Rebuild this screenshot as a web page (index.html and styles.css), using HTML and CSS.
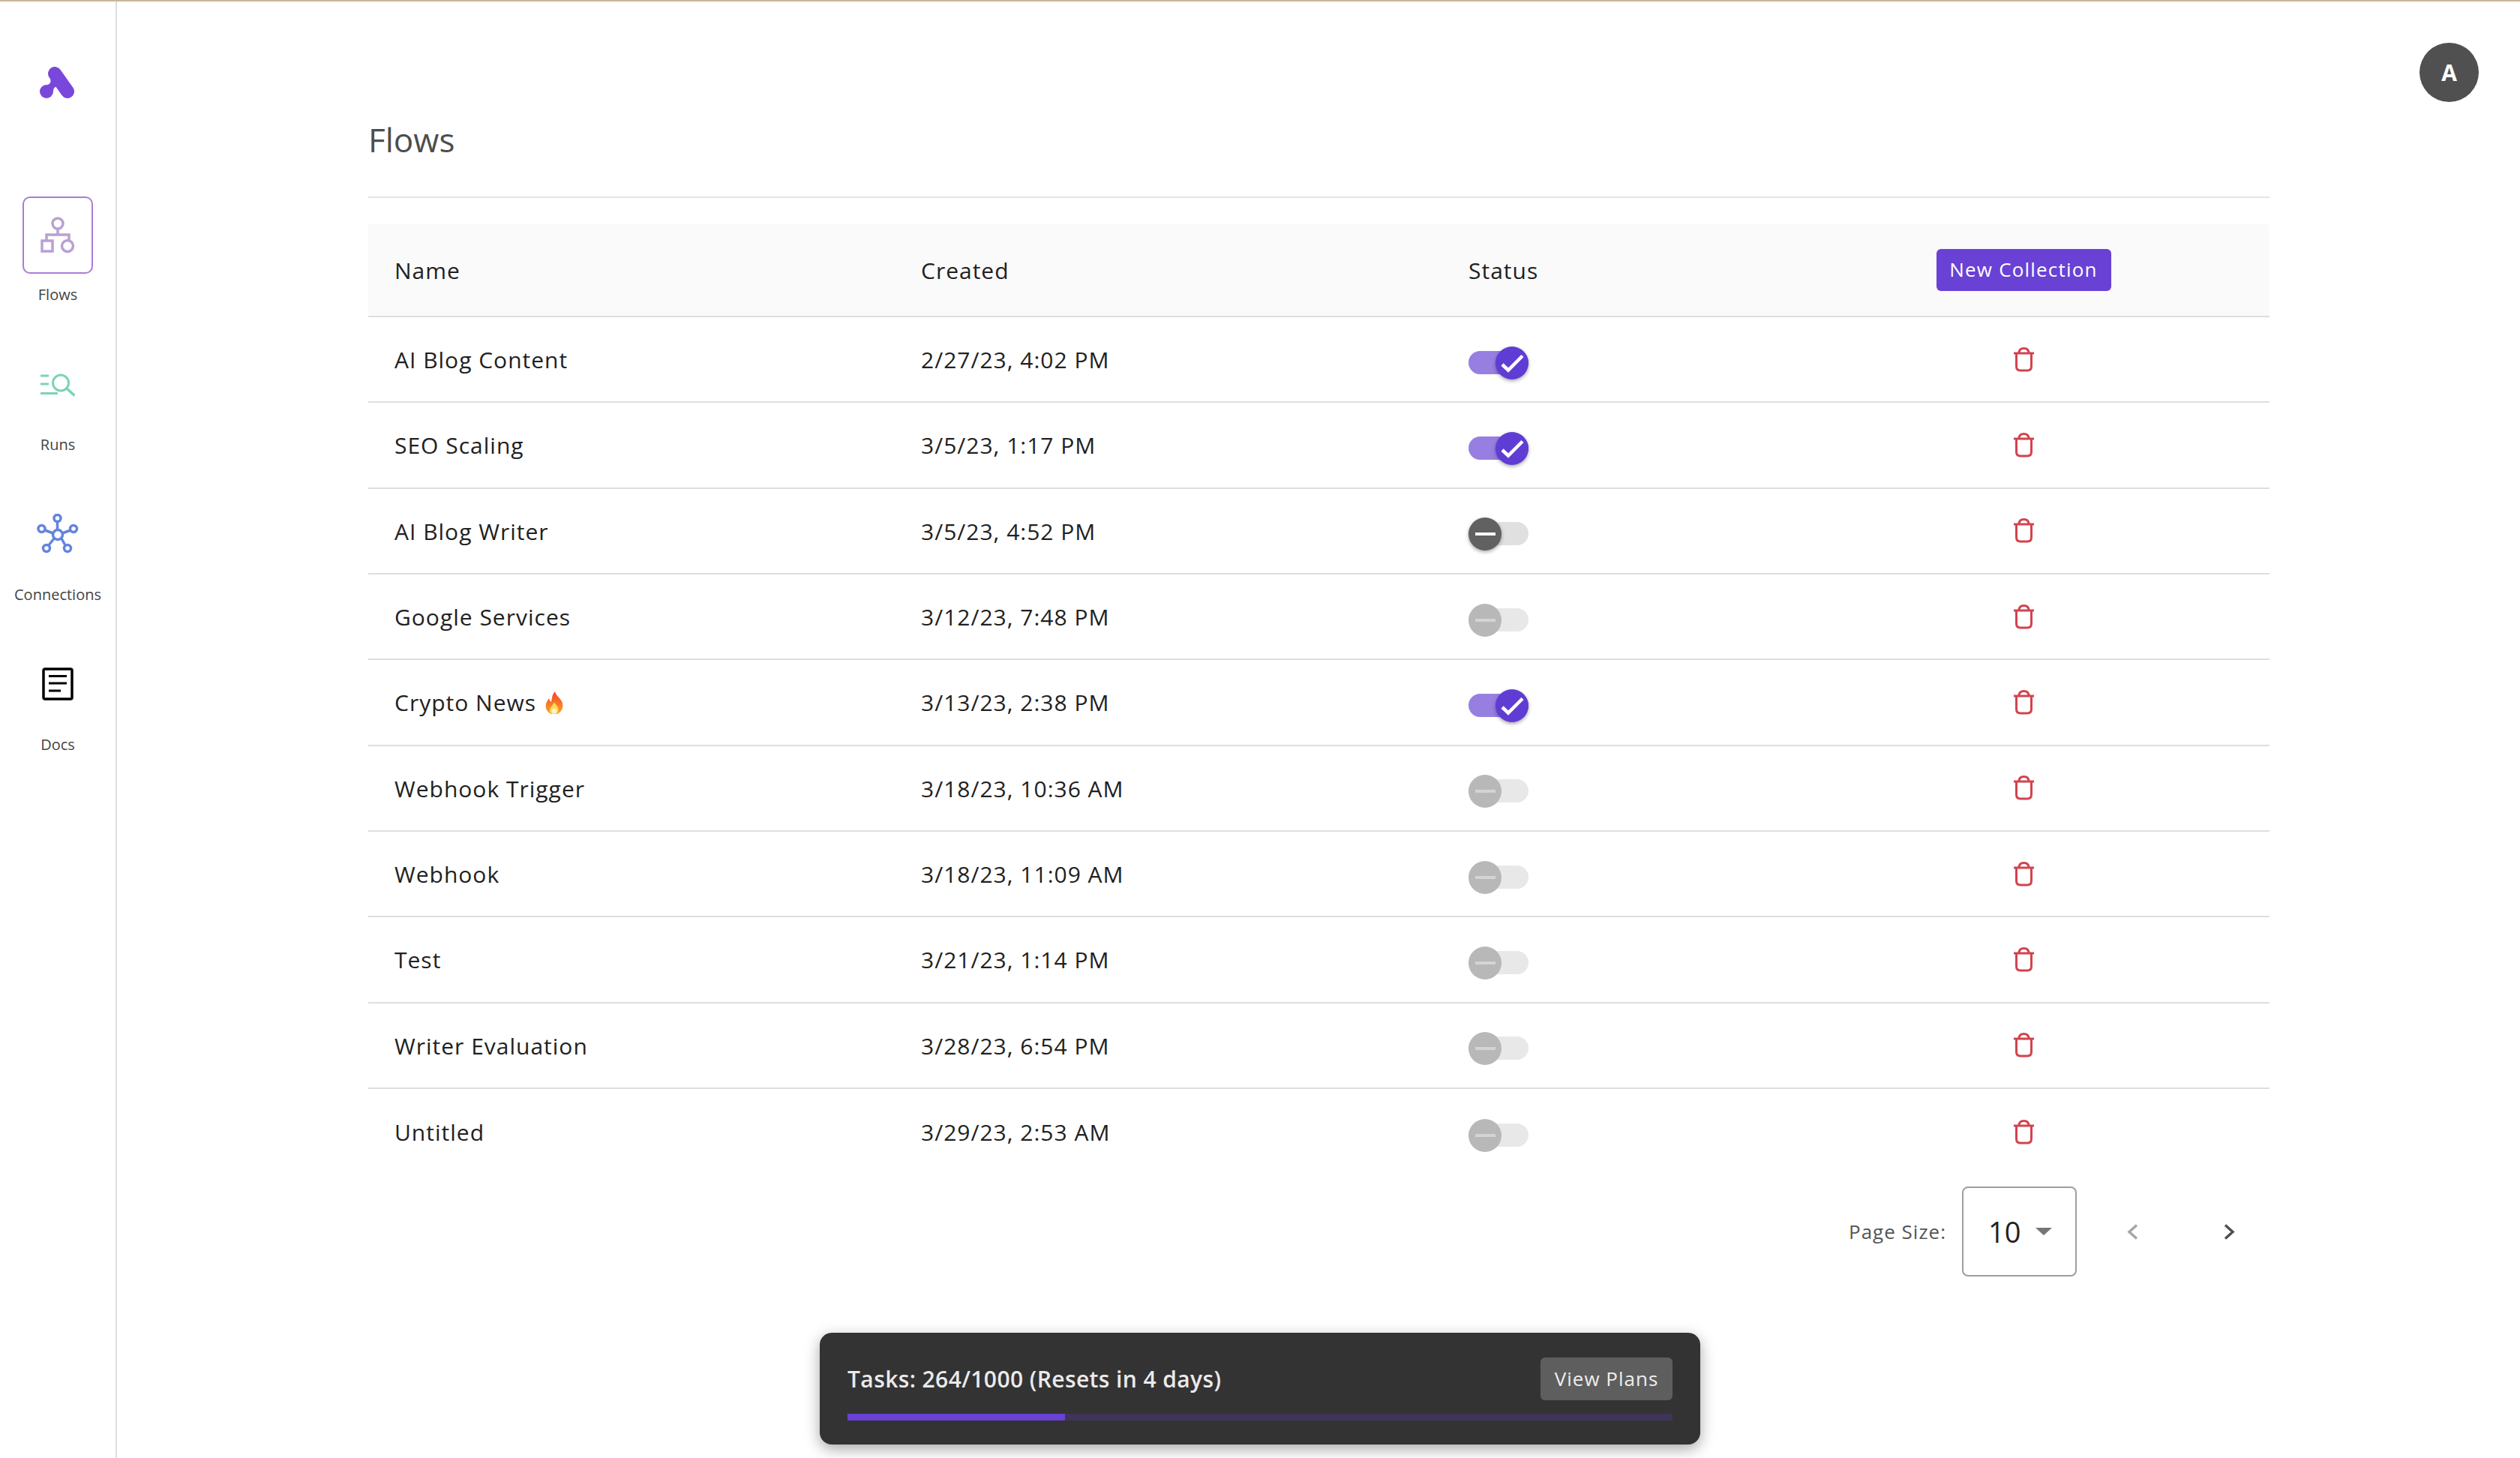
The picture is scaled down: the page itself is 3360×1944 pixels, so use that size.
FILE: index.html
```html
<!DOCTYPE html>
<html>
<head>
    <title>Flows</title>
    <link rel="stylesheet" href="styles.css">
</head>
<body>
<svg class="defs" width="0" height="0">
    <symbol id="trash" viewBox="0 0 27 33">
        <path d="M0 8H27M7 8C7 4 9 1.500 13.500 1.500S20 4 20 8M3.500 8V25.500C3.500 29 5.500 31 9 31H18C21.500 31 23.500 29 23.500 25.500V8" fill="none" stroke="#d1444f" stroke-width="3"/>
    </symbol>
    <symbol id="check" viewBox="0 0 44 44">
        <path d="M9 24L17 31.500L36 12.500" fill="none" stroke="#fff" stroke-width="4.500"/>
    </symbol>
</svg>

<div class="topline"></div>
<div class="app">
    <aside class="sidebar">
        <svg class="logo" width="46" height="42" viewBox="0 0 46 42">
            <path d="M20 9L37 33" fill="none" stroke="#7a47dc" stroke-width="18" stroke-linecap="round"/>
            <circle cx="9" cy="33" r="9" fill="#7a47dc"/>
            <path d="M10 24C16 23 15 17 13 12L24 27C20 25 18 30 18 33Z" fill="#7a47dc"/>
        </svg>
        <nav class="nav">
            <div class="nav-item">
                <div class="nav-icon active">
                    <svg width="46" height="49" viewBox="0 0 46 49" fill="none" stroke="#b9a0d2" stroke-width="3.500">
                        <circle cx="23" cy="9" r="7"/>
                        <path d="M23 16V24M8 32V24H38V32"/>
                        <rect x="2" y="32" width="14" height="14"/>
                        <circle cx="36" cy="39" r="7.500"/>
                    </svg>
                </div>
                <div class="nav-label">Flows</div>
            </div>
            <div class="nav-item">
                <div class="nav-icon">
                    <svg width="46" height="32" viewBox="0 0 46 32" fill="none" stroke="#7dd3b4" stroke-width="3">
                        <path d="M0 3H11M0 14H11M0 26.500H23"/>
                        <circle cx="27" cy="12.500" r="10.500"/>
                        <path d="M35 20L45.500 29.500" stroke-width="3.500"/>
                    </svg>
                </div>
                <div class="nav-label">Runs</div>
            </div>
            <div class="nav-item">
                <div class="nav-icon">
                    <svg class="nudge" width="56" height="54" viewBox="0 0 56 54" fill="none" stroke="#6484dd" stroke-width="3.500">
                        <circle cx="28" cy="28" r="6.500"/>
                        <circle cx="27.500" cy="6" r="4.500"/>
                        <circle cx="6.500" cy="20" r="4.500"/>
                        <circle cx="49" cy="20" r="4.500"/>
                        <circle cx="13" cy="46" r="4.500"/>
                        <circle cx="41" cy="46" r="4.500"/>
                        <path d="M27.500 11V21M11 22L22 26M45 22L34 26M16 42L23 33M38 42L33 33"/>
                    </svg>
                </div>
                <div class="nav-label">Connections</div>
            </div>
            <div class="nav-item">
                <div class="nav-icon">
                    <svg class="nudge" width="42" height="44" viewBox="0 0 42 44" fill="none" stroke="#000">
                        <rect x="2" y="2" width="38" height="40" rx="2" stroke-width="3.500"/>
                        <path d="M9 11.500H33M9 21H33M9 31H25" stroke-width="3"/>
                    </svg>
                </div>
                <div class="nav-label">Docs</div>
            </div>
        </nav>
    </aside>

    <main class="main">
        <h1 class="title">Flows</h1>

        <div class="table">
            <div class="row head">
                <div class="cell">Name</div>
                <div class="cell">Created</div>
                <div class="cell">Status</div>
                <div class="action"><button class="btn-new">New Collection</button></div>
            </div>

            <div class="row">
                <div class="cell">AI Blog Content</div>
                <div class="cell">2/27/23, 4:02 PM</div>
                <div class="switch"><div class="toggle on"><span class="thumb"><svg width="44" height="44"><use href="#check"/></svg></span></div></div>
                <div class="action"><svg class="trash"><use href="#trash"/></svg></div>
            </div>
            <div class="row">
                <div class="cell">SEO Scaling</div>
                <div class="cell">3/5/23, 1:17 PM</div>
                <div class="switch"><div class="toggle on"><span class="thumb"><svg width="44" height="44"><use href="#check"/></svg></span></div></div>
                <div class="action"><svg class="trash"><use href="#trash"/></svg></div>
            </div>
            <div class="row">
                <div class="cell">AI Blog Writer</div>
                <div class="cell">3/5/23, 4:52 PM</div>
                <div class="switch"><div class="toggle off"><span class="thumb"><i class="dash"></i></span></div></div>
                <div class="action"><svg class="trash"><use href="#trash"/></svg></div>
            </div>
            <div class="row">
                <div class="cell">Google Services</div>
                <div class="cell">3/12/23, 7:48 PM</div>
                <div class="switch"><div class="toggle off disabled"><span class="thumb"><i class="dash"></i></span></div></div>
                <div class="action"><svg class="trash"><use href="#trash"/></svg></div>
            </div>
            <div class="row">
                <div class="cell">Crypto News
                    <svg class="fire" width="24" height="30" viewBox="0 0 24 30">
                        <defs>
                            <linearGradient id="flame" x1="0" y1="0" x2="0" y2="1">
                                <stop offset="0" stop-color="#f0452c"/>
                                <stop offset="0.6" stop-color="#fb7d24"/>
                                <stop offset="1" stop-color="#fda32a"/>
                            </linearGradient>
                        </defs>
                        <path d="M13 0C14 5 19 8 22 13C25 19 23 27 16 30H8C1 27-1 20 2 14C3 12 4 11 5 9C6 11 6 13 8 14C9 9 9 4 13 0Z" fill="url(#flame)"/>
                        <path d="M12 14C13 17 18 20 17.500 25C17 28 15 30 12 30C8.500 30 6 28 6 25C6 21 10 19 12 14Z" fill="#fdd85a"/>
                        <circle cx="12" cy="26" r="3.500" fill="#fff3c0"/>
                    </svg>
                </div>
                <div class="cell">3/13/23, 2:38 PM</div>
                <div class="switch"><div class="toggle on"><span class="thumb"><svg width="44" height="44"><use href="#check"/></svg></span></div></div>
                <div class="action"><svg class="trash"><use href="#trash"/></svg></div>
            </div>
            <div class="row">
                <div class="cell">Webhook Trigger</div>
                <div class="cell">3/18/23, 10:36 AM</div>
                <div class="switch"><div class="toggle off disabled"><span class="thumb"><i class="dash"></i></span></div></div>
                <div class="action"><svg class="trash"><use href="#trash"/></svg></div>
            </div>
            <div class="row">
                <div class="cell">Webhook</div>
                <div class="cell">3/18/23, 11:09 AM</div>
                <div class="switch"><div class="toggle off disabled"><span class="thumb"><i class="dash"></i></span></div></div>
                <div class="action"><svg class="trash"><use href="#trash"/></svg></div>
            </div>
            <div class="row">
                <div class="cell">Test</div>
                <div class="cell">3/21/23, 1:14 PM</div>
                <div class="switch"><div class="toggle off disabled"><span class="thumb"><i class="dash"></i></span></div></div>
                <div class="action"><svg class="trash"><use href="#trash"/></svg></div>
            </div>
            <div class="row">
                <div class="cell">Writer Evaluation</div>
                <div class="cell">3/28/23, 6:54 PM</div>
                <div class="switch"><div class="toggle off disabled"><span class="thumb"><i class="dash"></i></span></div></div>
                <div class="action"><svg class="trash"><use href="#trash"/></svg></div>
            </div>
            <div class="row last">
                <div class="cell">Untitled</div>
                <div class="cell">3/29/23, 2:53 AM</div>
                <div class="switch"><div class="toggle off disabled"><span class="thumb"><i class="dash"></i></span></div></div>
                <div class="action"><svg class="trash"><use href="#trash"/></svg></div>
            </div>
        </div>

        <div class="pager">
            <span class="pager-label">Page Size:</span>
            <div class="select"><span>10</span><i class="caret"></i></div>
            <svg class="chev prev" width="15" height="21" viewBox="0 0 15 21"><path d="M13 1.500L3 10.500L13 19.500" fill="none" stroke="#a6a6a6" stroke-width="3.500"/></svg>
            <svg class="chev next" width="15" height="21" viewBox="0 0 15 21"><path d="M2 1.500L12 10.500L2 19.500" fill="none" stroke="#4f4f4f" stroke-width="3.500"/></svg>
        </div>
    </main>
</div>

<div class="avatar">A</div>

<div class="toast">
    <div class="toast-top">
        <span class="toast-text">Tasks: 264/1000 (Resets in 4 days)</span>
        <button class="btn-plans">View Plans</button>
    </div>
    <div class="progress"><div class="progress-fill" style="width: 26.4%"></div></div>
</div>
</body>
</html>
```
FILE: styles.css
```css
* {
    box-sizing: border-box;
}
html, body {
    margin: 0;
    height: 100%;
    overflow: hidden;
}
body {
    font-family: "Open Sans", sans-serif;
    background: #fff;
    color: #212121;
    position: relative;
}
.defs {
    position: absolute;
}
.topline {
    height: 2px;
    background: #c9b79c;
}
.app {
    display: flex;
    height: 1942px;
}

/* left nav */
.sidebar {
    width: 156px;
    flex: none;
    border-right: 2px solid #dedede;
    padding-top: 87px;
}
.logo {
    display: block;
    margin-left: 53px;
}
.nav {
    margin-top: 131px;
}
.nav-item {
    height: 200px;
    display: flex;
    flex-direction: column;
    align-items: center;
    width: 144px;
    margin-left: 5px;
}
.nav-icon {
    width: 94px;
    height: 103px;
    display: flex;
    align-items: center;
    justify-content: center;
    border: 2px solid transparent;
    border-radius: 10px;
}
.nav-icon.active {
    border-color: #a87cd6;
}
.nav-icon .nudge {
    margin-bottom: 3px;
}
.nav-label {
    margin-top: 14px;
    font-size: 20px;
    line-height: 28px;
    color: #444;
}

/* content */
.main {
    flex: 1;
    padding: 0 334px 0 335px;
}
.title {
    margin: 0 0 35px;
    height: 262px;
    padding-top: 154px;
    font-size: 44px;
    line-height: 60px;
    font-weight: 400;
    color: #4d4d4d;
    border-bottom: 2px solid #e4e4ea;
}
.row {
    display: grid;
    grid-template-columns: 702px 730px 447px 1fr;
    align-items: center;
    height: 114.33px;
    border-bottom: 2px solid #dedede;
}
.row.head {
    height: 124px;
    background: #fafafa;
}
.row.last {
    border-bottom: 0;
}
.cell {
    padding: 2px 0 0 35px;
    font-size: 30px;
    line-height: 40px;
    letter-spacing: 1px;
    color: #212121;
    white-space: nowrap;
}
.switch {
    padding-left: 35px;
}
.action {
    display: flex;
    justify-content: center;
}
.btn-new {
    width: 233px;
    height: 56px;
    border: 0;
    border-radius: 6px;
    background: #6941d5;
    color: #fff;
    font-family: inherit;
    font-size: 26px;
    letter-spacing: 1.2px;
    padding: 0 0 2px;
}
.trash {
    display: block;
    width: 27px;
    height: 33px;
}
.fire {
    vertical-align: -4px;
    margin-left: 3px;
}

/* status switch */
.toggle {
    width: 80px;
    height: 31px;
    border-radius: 16px;
    position: relative;
    top: 4px;
}
.thumb {
    position: absolute;
    top: -6px;
    width: 44px;
    height: 44px;
    border-radius: 50%;
    display: flex;
    align-items: center;
    justify-content: center;
    box-shadow: 0 2px 5px rgba(0, 0, 0, 0.35);
}
.toggle.on {
    background: #977fe2;
}
.toggle.on .thumb {
    right: 0;
    background: #5f3dd4;
}
.toggle.off {
    background: #e0e0e0;
}
.toggle.off .thumb {
    left: 0;
    background: #616161;
}
.toggle.disabled {
    background: #e8e8e8;
}
.toggle.disabled .thumb {
    background: #b8b8b8;
    box-shadow: none;
}
.dash {
    display: block;
    width: 27px;
    height: 4px;
    background: #fff;
}
.toggle.disabled .dash {
    background: #d4d4d4;
}

/* pager */
.pager {
    display: flex;
    align-items: center;
    margin-top: 16px;
    padding-left: 1974px;
}
.pager-label {
    width: 151px;
    font-size: 26px;
    letter-spacing: 1px;
    color: #555;
    white-space: nowrap;
}
.select {
    width: 153px;
    height: 120px;
    border: 2px solid #9e9e9e;
    border-radius: 8px;
    display: flex;
    align-items: center;
    padding-left: 33px;
    font-size: 38px;
    color: #212121;
}
.caret {
    margin-left: 20px;
    border-left: 11px solid transparent;
    border-right: 11px solid transparent;
    border-top: 10px solid #757575;
}
.chev.prev {
    margin-left: 67px;
}
.chev.next {
    margin-left: 114px;
}

/* overlays */
.avatar {
    position: absolute;
    top: 57px;
    left: 3226px;
    width: 79px;
    height: 79px;
    border-radius: 50%;
    background: #505050;
    color: #fff;
    font-size: 30px;
    font-weight: 700;
    line-height: 79px;
    text-align: center;
}
.toast {
    position: absolute;
    left: 1093px;
    top: 1777px;
    width: 1174px;
    height: 149px;
    padding: 33px 37px 0;
    background: #333;
    border-radius: 16px;
    box-shadow: 0 6px 20px rgba(0, 0, 0, 0.35);
}
.toast-top {
    display: flex;
    align-items: center;
    justify-content: space-between;
    height: 57px;
}
.toast-text {
    font-size: 30px;
    font-weight: 600;
    letter-spacing: 0.4px;
    color: #eaeaea;
}
.btn-plans {
    width: 176px;
    height: 57px;
    border: 0;
    border-radius: 6px;
    background: #5e5e5e;
    color: #eee;
    font-family: inherit;
    font-size: 26px;
    letter-spacing: 1px;
    padding: 0 0 2px;
}
.progress {
    margin-top: 18px;
    height: 9px;
    background: #40345a;
}
.progress-fill {
    height: 100%;
    background: #6941d5;
}
```
